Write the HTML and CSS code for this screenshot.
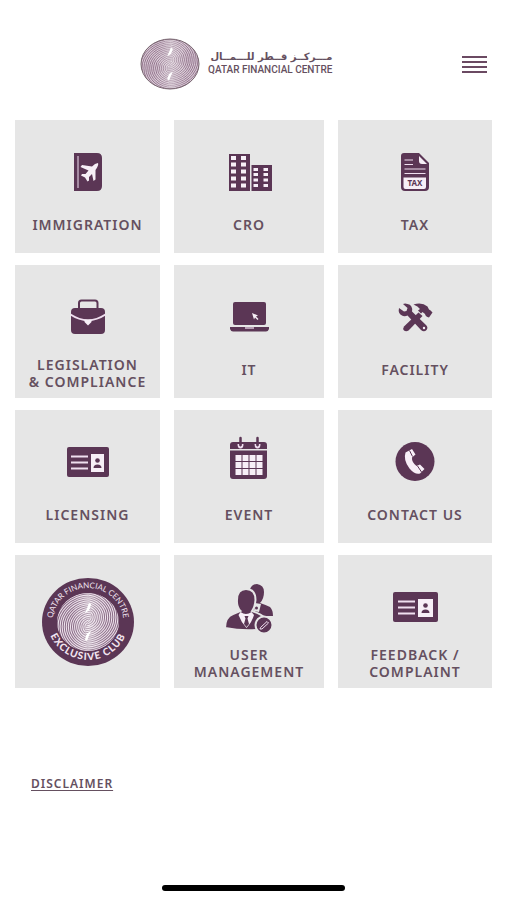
FILE: index.html
```
<!DOCTYPE html>
<html lang="en">
<head>
    <meta charset="UTF-8">
    <meta name="viewport" content="width=device-width, initial-scale=1.0">
    <title>Qatar Financial Centre</title>
    <link rel="stylesheet" href="styles.css">
</head>
<body>
    <!-- Shared swirl emblem -->
    <svg class="defs" aria-hidden="true">
        <defs>
            <clipPath id="left-half"><path d="M0 -30A30 30 0 0 0 0 30L-3 8L3 -8Z"/></clipPath>
            <clipPath id="right-half"><path d="M0 -30A30 30 0 0 1 0 30L-3 8L3 -8Z"/></clipPath>
            <linearGradient id="shine" x1="0" x2="1" y1="0" y2="0">
                <stop offset="0.25" stop-color="#fff" stop-opacity="0"/>
                <stop offset="0.52" stop-color="#fff" stop-opacity="0.4"/>
                <stop offset="0.8" stop-color="#fff" stop-opacity="0"/>
            </linearGradient>
            <g id="rings">
                <circle r="3"/><circle r="5"/><circle r="7"/><circle r="9"/><circle r="11"/>
                <circle r="13"/><circle r="15"/><circle r="17"/><circle r="19"/><circle r="21"/>
                <circle r="23"/><circle r="25"/><circle r="27"/><circle r="29"/><circle r="31"/>
                <circle r="33"/><circle r="35"/>
            </g>
            <symbol id="swirl" viewBox="-30 -30 60 60" preserveAspectRatio="none">
                <g fill="none" stroke="currentColor" stroke-width="1">
                    <g clip-path="url(#left-half)"><use href="#rings" x="2" y="5"/></g>
                    <g clip-path="url(#right-half)"><use href="#rings" x="-2" y="-5"/></g>
                </g>
                <circle r="29" fill="url(#shine)"/>
                <path d="M1 -20L3 -18L1 -12L-3 -9L-1 -14ZM-1 20L-3 18L-1 12L3 9L1 14Z" fill="#fff"/>
            </symbol>
        </defs>
    </svg>

    <header class="header">
        <a href="#" class="brand">
            <svg class="brand-mark" viewBox="0 0 60 52" aria-hidden="true">
                <ellipse cx="30" cy="26" rx="29" ry="25" fill="#d9cbd6"/>
                <use href="#swirl" x="1" y="1" width="58" height="50"/>
                <ellipse cx="30" cy="26" rx="29" ry="25" fill="none" stroke="#77656f"/>
            </svg>
            <span class="brand-text">
                <span class="brand-ar" lang="ar" dir="rtl">مـــركــز قــطر للـــمــال</span>
                <span class="brand-en">QATAR FINANCIAL CENTRE</span>
            </span>
        </a>
        <button class="menu" type="button" aria-label="Menu">
            <span></span><span></span><span></span><span></span>
        </button>
    </header>

    <main>
        <nav class="tiles">
            <a href="#" class="tile">
                <svg class="icon" viewBox="0 0 56 56" aria-hidden="true">
                    <path d="M14 9H37Q42 9 42 14V42Q42 47 37 47H14Z"/>
                    <path class="line thin" d="M18 12V44"/>
                    <path class="light" d="M38 19Q35 19 32 22.500L22 21L20.500 23L28.500 26.500L25.500 30L22 30L21 31.500L25 33.500L27.500 37.500L29 36.500L29 33L32 30L33.500 37L35.500 35.500L35.500 26Q39 21 38 19Z"/>
                </svg>
                <span class="label">IMMIGRATION</span>
            </a>

            <a href="#" class="tile">
                <svg class="icon" viewBox="0 0 56 56" aria-hidden="true">
                    <path d="M8 10H29V47H8ZM30.500 21H51V47H30.500Z"/>
                    <path class="light" d="M10 12h5v4h-5zM20 12h5v4h-5zM10 18.500h5v4h-5zM20 18.500h5v4h-5zM10 25.500h5v4h-5zM20 25.500h5v4h-5zM10 32.500h5v4h-5zM20 32.500h5v4h-5zM10 39.500h5v4h-5zM20 39.500h5v4h-5z"/>
                    <path class="light" d="M32.500 24h4.500v3h-4.500zM42.500 24h4.500v3h-4.500zM32.500 29h4.500v3h-4.500zM42.500 29h4.500v3h-4.500zM32.500 34.500h4.500v3h-4.500zM42.500 34.500h4.500v3h-4.500zM32.500 40h4.500v3h-4.500zM42.500 40h4.500v3h-4.500z"/>
                </svg>
                <span class="label">CRO</span>
            </a>

            <a href="#" class="tile">
                <svg class="icon" viewBox="0 0 56 56" aria-hidden="true">
                    <path d="M17 9H32L42 19V43Q42 47 38 47H18Q14 47 14 43V12Q14 9 17 9Z"/>
                    <path class="light" d="M32 12V17Q32 20 35 20H40ZM16.500 33.500H39V43Q39 45 37 45H18.500Q16.500 45 16.500 43Z"/>
                    <path class="line thin" d="M17.500 16H26M17.500 20.500H26M17.500 25H38.500M17.500 29.500H38.500"/>
                    <text class="icon-text" x="28" y="42">TAX</text>
                </svg>
                <span class="label">TAX</span>
            </a>

            <a href="#" class="tile">
                <svg class="icon" viewBox="0 0 56 56" aria-hidden="true">
                    <path d="M19 20V14Q19 11.500 21.500 11.500H35Q37.500 11.500 37.500 14V20" fill="none" stroke="currentColor" stroke-width="2"/>
                    <path d="M15 19H41Q45 19 45 23V41Q45 45 41 45H15Q11 45 11 41V23Q11 19 15 19Z"/>
                    <path class="line" d="M10.500 25.500Q19 31 28 31.500Q37 31 45.500 25.500"/>
                    <path class="light" d="M24.500 30.500H31.500V33L28 36.500L24.500 33Z"/>
                </svg>
                <span class="label">LEGISLATION<br>&amp; COMPLIANCE</span>
            </a>

            <a href="#" class="tile">
                <svg class="icon" viewBox="0 0 56 56" aria-hidden="true">
                    <rect x="12" y="13" width="33" height="23" rx="2"/>
                    <path d="M9 38H48V40Q47 42.500 45 42.500H12Q10 42.500 9 40Z"/>
                    <path d="M24 38H33V40H24Z" fill="#b79db3"/>
                    <path class="light" d="M31 24L37 26.500L35 27.500L37.500 30L36.500 31L34 28.500L33 30.500Z"/>
                </svg>
                <span class="label">IT</span>
            </a>

            <a href="#" class="tile">
                <svg class="icon" viewBox="0 0 56 56" aria-hidden="true">
                    <path d="M16 15L20.500 19L19.500 22L17 22.500L12 19Q10.500 25 16 27Q18.500 27.500 20.500 26.500L34 41Q37 43.500 39.500 41Q41.500 38.500 39 36L25 22.500Q26 16 20.500 15Q18 14 16 15Z"/>
                    <path d="M26.500 15.500Q35 13 40.500 17.500L42 20.500Q43.500 21 45.500 23.500L42 28.500Q38.500 27.500 38 25L35.500 23L34 24.500L31 21.500L33 20Q31 17 26.500 15.500Z"/>
                    <path class="line thin" d="M30 23L35 28"/>
                    <path d="M31.500 23.500L35.500 27L21.500 41.500Q19 43 17 41.500Q15.500 39.500 17 37.500Z"/>
                    <circle class="light" cx="37" cy="39" r="1.200"/>
                </svg>
                <span class="label">FACILITY</span>
            </a>

            <a href="#" class="tile">
                <svg class="icon" viewBox="0 0 56 56" aria-hidden="true">
                    <rect x="7" y="13" width="42" height="30" rx="2"/>
                    <path class="line" d="M11 22.500H28M11 28.500H28M11 34.500H28"/>
                    <path class="light" d="M31 20H44V38H31Z"/>
                    <circle cx="37.500" cy="26.500" r="2.300"/>
                    <path d="M33.500 34Q33.500 30.500 37.500 30.500T41.500 34Z"/>
                </svg>
                <span class="label">LICENSING</span>
            </a>

            <a href="#" class="tile">
                <svg class="icon" viewBox="0 0 56 56" aria-hidden="true">
                    <path d="M12 8H43Q46 8 46 11V15H9V11Q9 8 12 8ZM9 16.500H46V42Q46 45 43 45H12Q9 45 9 42Z"/>
                    <path class="line" d="M17.500 10Q17.500 13.500 19.500 13.500T21.500 10M34.500 10Q34.500 13.500 36.500 13.500T38.500 10"/>
                    <path d="M19.500 4V11M36.500 4V11" stroke="currentColor" stroke-width="2.500" stroke-linecap="round"/>
                    <path class="light" d="M14.500 21h6v6h-6zM21.500 21h6v6h-6zM28.500 21h6v6h-6zM35.500 21h6v6h-6zM14.500 28h6v6h-6zM21.500 28h6v6h-6zM28.500 28h6v6h-6zM35.500 28h6v6h-6zM14.500 35h6v6h-6zM21.500 35h6v6h-6zM28.500 35h6v6h-6zM35.500 35h6v6h-6z"/>
                </svg>
                <span class="label">EVENT</span>
            </a>

            <a href="#" class="tile">
                <svg class="icon" viewBox="0 0 56 56" aria-hidden="true">
                    <circle cx="28" cy="27.500" r="19.500"/>
                    <path class="light" d="M18.500 18.500L25 15L28.500 20.500L25 23.500Q24.500 28 29.500 32L33 30.500L37.500 35L33 39.500Q28 41 22.500 34.500Q16 26 18.500 18.500Z"/>
                    <path d="M22.500 16.500L25.500 22.500M30.500 32L34.500 38" stroke="#5b3655"/>
                </svg>
                <span class="label">CONTACT US</span>
            </a>

            <a href="#" class="tile tile-club" aria-label="Exclusive Club">
                <svg class="club" viewBox="0 0 92 90">
                    <path id="club-top" d="M10.500 45A35.500 34 0 0 1 81.500 45" fill="none"/>
                    <path id="club-bottom" d="M5 42A41 41 0 0 0 87 42" fill="none"/>
                    <ellipse cx="46" cy="45" rx="46" ry="44"/>
                    <ellipse cx="46" cy="45" rx="31" ry="29" fill="#8a6d87"/>
                    <use class="club-swirl" href="#swirl" x="15" y="16" width="62" height="58"/>
                    <text class="club-name"><textPath href="#club-top" startOffset="50%">QATAR FINANCIAL CENTRE</textPath></text>
                    <text class="club-title"><textPath href="#club-bottom" startOffset="50%">EXCLUSIVE CLUB</textPath></text>
                </svg>
            </a>

            <a href="#" class="tile">
                <svg class="icon" viewBox="0 0 56 56" aria-hidden="true">
                    <path d="M29 10Q31 5 36 5Q43 6 43 13Q43 20 39 24Q45 26 49 28Q52 31 52 37H36L28 24Z"/>
                    <path d="M34 24L40 25L38 33L33 32Z" fill="#e6e6e6"/>
                    <circle cx="35.500" cy="29" r="1.500"/>
                    <path class="outline" d="M25 10Q34.500 10 34.500 21Q34 28 31 32Q40 35 44 39V50Q25 53 4 49Q4 38 12 35L19.500 32Q15.500 28 16 21Q16 10 25 10Z"/>
                    <path class="light" d="M19.500 33Q25 37 30.500 33L33 36Q31 43 25.500 49Q20 43 17.500 36Z"/>
                    <path d="M23.500 37H27.500L26.500 39.500L28 45L25.500 48L23 45L24.500 39.500Z"/>
                    <circle class="outline" cx="43" cy="46" r="8.500"/>
                    <path class="line thin" d="M39.500 48.500L46 42.500L47.500 44L41 50L39 50Z"/>
                </svg>
                <span class="label">USER<br>MANAGEMENT</span>
            </a>

            <a href="#" class="tile">
                <svg class="icon" viewBox="0 0 56 56" aria-hidden="true">
                    <rect x="6" y="13" width="45" height="30" rx="2"/>
                    <path class="line" d="M11 22.500H28M11 28.500H28M11 34.500H28"/>
                    <path class="light" d="M31 20H46V38H31Z"/>
                    <circle cx="38.500" cy="26.500" r="2.300"/>
                    <path d="M34.500 34Q34.500 30.500 38.500 30.500T42.500 34Z"/>
                </svg>
                <span class="label">FEEDBACK /<br>COMPLAINT</span>
            </a>
        </nav>

        <a href="#" class="disclaimer">DISCLAIMER</a>
    </main>

    <div class="home-bar"></div>
</body>
</html>
```
FILE: styles.css
```
* {
    box-sizing: border-box;
}

body {
    margin: 0;
    min-height: 100vh;
    display: flex;
    flex-direction: column;
    background-color: #fff;
    color: #655060;
    font-family: "Noto Sans", "Open Sans", sans-serif;
}

a {
    color: inherit;
    text-decoration: none;
}

.defs {
    position: absolute;
    width: 0;
    height: 0;
}

/* Header */
.header {
    display: grid;
    grid-template-columns: auto 25px;
    align-items: center;
    justify-content: space-between;
    height: 120px;
    padding: 8px 20px 0 140px;
}

.brand {
    display: flex;
    align-items: center;
    gap: 8px;
}

.brand-mark {
    width: 60px;
    height: 52px;
    color: #8b6a85;
}

.brand-text {
    display: flex;
    flex-direction: column;
    white-space: nowrap;
}

.brand-ar {
    font-family: "DejaVu Sans", sans-serif;
    font-size: 10px;
    line-height: 12px;
    font-weight: 700;
}

.brand-en {
    font-family: Roboto, sans-serif;
    font-size: 10px;
    line-height: 14px;
    font-weight: 500;
}

.menu {
    display: flex;
    flex-direction: column;
    gap: 3px;
    padding: 0;
    border: none;
    background: none;
}

.menu span {
    height: 2px;
    width: 100%;
    background-color: #6b4a62;
}

/* Tiles */
.tiles {
    display: grid;
    grid-template-columns: 145fr 150fr 154fr;
    grid-auto-rows: 133px;
    gap: 12px 14px;
    padding: 0 15px;
}

.tile {
    display: flex;
    flex-direction: column;
    align-items: center;
    padding-top: 24px;
    background-color: #e6e6e6;
}

.tile-club {
    justify-content: center;
    padding-top: 0;
}

.icon {
    width: 56px;
    height: 56px;
    flex-shrink: 0;
}

.icon,
.club {
    color: #5b3655;
    fill: currentColor;
}

.light {
    fill: #f7eff7;
}

.line {
    fill: none;
    stroke: #f0dff0;
    stroke-width: 2;
}

.thin {
    stroke-width: 1;
}

.outline {
    stroke: #e6e6e6;
    stroke-width: 2;
}

.icon-text {
    font-size: 8px;
    font-weight: 700;
    text-anchor: middle;
}

.label {
    display: flex;
    align-items: center;
    min-height: 26px;
    margin-top: 11px;
    font-size: 14px;
    line-height: 17px;
    font-weight: 600;
    letter-spacing: 1px;
    text-align: center;
}

.club {
    width: 92px;
    height: 90px;
}

.club-swirl {
    color: #eee2ec;
}

.club text {
    fill: #f1e4ef;
    text-anchor: middle;
    font-family: Lato, sans-serif;
}

.club-name {
    font-size: 8px;
}

.club .club-title {
    font-size: 10px;
    font-weight: 900;
    letter-spacing: 1px;
}

/* Footer */
.disclaimer {
    display: inline-block;
    margin: 88px 0 0 31px;
    font-size: 12px;
    line-height: 16px;
    font-weight: 600;
    letter-spacing: 1px;
    text-decoration: underline;
    text-underline-offset: 2px;
}

.home-bar {
    width: 36%;
    height: 6px;
    margin: auto auto 9px;
    border-radius: 3px;
    background-color: #000;
}
```
